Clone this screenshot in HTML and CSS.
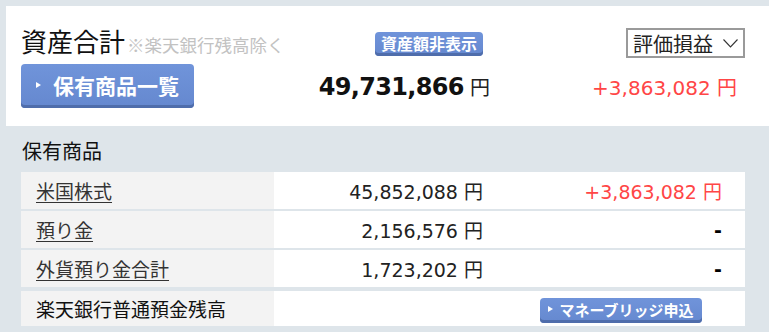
FILE: index.html
```html
<!DOCTYPE html>
<html lang="ja">

<head>
    <meta charset="UTF-8">
    <meta name="viewport" content="width=device-width, initial-scale=1.0">
    <title>資産合計</title>
    <link rel="stylesheet" href="styles.css">
</head>

<body>
    <div class="summary">
        <div class="summary-head">
            <h1 class="title">資産合計<span class="note">※楽天銀行残高除く</span></h1>
            <button class="btn btn-small">資産額非表示</button>
            <div class="select">
                <span>評価損益</span>
                <svg width="15" height="9" viewBox="0 0 15 9">
                    <polyline points="0.5,0.5 7.5,8 14.5,0.5" fill="none" stroke="#333" stroke-width="1.1" />
                </svg>
            </div>
        </div>
        <div class="summary-body">
            <a class="btn btn-large" href="#"><span class="arrow"></span>保有商品一覧</a>
            <div class="total"><b>49,731,866</b> <span class="yen">円</span></div>
            <div class="profit">+3,863,082 円</div>
        </div>
    </div>

    <div class="holdings">
        <h2>保有商品</h2>
        <table class="holding-table">
            <tr>
                <td class="label"><a href="#">米国株式</a></td>
                <td class="value">45,852,088 円</td>
                <td class="gain plus">+3,863,082 円</td>
            </tr>
            <tr>
                <td class="label"><a href="#">預り金</a></td>
                <td class="value">2,156,576 円</td>
                <td class="gain"><b>-</b></td>
            </tr>
            <tr>
                <td class="label"><a href="#">外貨預り金合計</a></td>
                <td class="value">1,723,202 円</td>
                <td class="gain"><b>-</b></td>
            </tr>
        </table>
        <table class="bank-table">
            <tr>
                <td class="label">楽天銀行普通預金残高</td>
                <td class="value"></td>
                <td class="apply"><a class="btn btn-small" href="#"><span class="arrow"></span>マネーブリッジ申込</a></td>
            </tr>
        </table>
    </div>
</body>

</html>
```

FILE: styles.css
```css
body {
    margin: 0;
    background-color: #dee5ea;
    font-family: "DejaVu Sans", "Noto Sans CJK JP", sans-serif;
    color: #222;
}

.summary {
    background-color: #fff;
    margin: 6px 0 0 6px;
    padding: 22px 24px 18px 15px;
}

.summary-head {
    display: flex;
    align-items: center;
    height: 30px;
}

.title {
    width: 354px;
    margin: 0;
    font-family: "Noto Sans CJK JP", sans-serif;
    font-size: 26px;
    font-weight: normal;
    line-height: 30px;
    color: #111;
    white-space: nowrap;
}

.note {
    margin-left: 2px;
    font-size: 17.5px;
    color: #c2c2c2;
}

.btn {
    display: inline-flex;
    align-items: center;
    justify-content: center;
    box-sizing: border-box;
    border: none;
    border-radius: 4px;
    background: linear-gradient(#7094da, #6588cf);
    box-shadow: inset 0 -3px 0 #4f6dab;
    color: #fff;
    font-family: "Noto Sans CJK JP", sans-serif;
    font-weight: bold;
    text-decoration: none;
    cursor: pointer;
}

.btn-small {
    height: 24px;
    padding: 0 0 2px;
    font-size: 15px;
}

.summary-head .btn-small {
    width: 108px;
    margin-top: 2px;
    font-size: 16px;
}

.btn-large {
    width: 173px;
    height: 44px;
    padding: 0 0 3px;
    font-size: 21px;
}

.arrow {
    width: 0;
    height: 0;
    border-top: 3px solid transparent;
    border-bottom: 3px solid transparent;
    border-left: 5px solid #fff;
    margin-right: 12px;
}

.btn-small .arrow {
    margin-right: 6px;
}

.select {
    margin-left: auto;
    width: 119px;
    height: 30px;
    box-sizing: border-box;
    border: 2px solid #9a9a9a;
    display: flex;
    align-items: center;
    justify-content: space-between;
    padding: 0 5px 0 5px;
    font-family: "Noto Sans CJK JP", sans-serif;
    font-size: 20px;
    color: #222;
}

.summary-body {
    display: flex;
    align-items: center;
    margin-top: 6px;
}

.total {
    flex: 1;
    text-align: right;
    font-size: 20px;
}

.total b {
    font-size: 24px;
    letter-spacing: -0.7px;
    color: #111;
}

.profit {
    width: 247px;
    margin-right: 8px;
    text-align: right;
    font-size: 20px;
    color: #ff4646;
}

.holdings {
    padding: 11px 24px 0 21px;
}

.holdings h2 {
    margin: 0 0 5px 1px;
    font-family: "Noto Sans CJK JP", sans-serif;
    font-size: 20px;
    font-weight: normal;
    line-height: 28px;
    color: #111;
}

table {
    width: 724px;
    border-collapse: separate;
    border-spacing: 0 2px;
    font-size: 19px;
}

td {
    height: 37px;
    padding: 0;
    background-color: #fff;
}

td.label {
    width: 238px;
    padding-left: 15px;
    background-color: #f3f3f3;
    font-family: "Noto Sans CJK JP", sans-serif;
    color: #111;
}

td.label a {
    color: #333;
    text-decoration: underline;
    text-underline-offset: 3px;
}

td.value {
    width: 209px;
    padding-right: 14px;
    text-align: right;
}

td.gain {
    padding-right: 23px;
    text-align: right;
}

td.gain b {
    color: #000;
}

td.plus {
    color: #ff4646;
}

.bank-table {
    margin-top: 2px;
    border-spacing: 0;
}

.bank-table td {
    height: 35px;
}

td.apply {
    text-align: center;
}

.apply .btn-small {
    width: 162px;
    height: 25px;
    margin-top: 2px;
}
```
